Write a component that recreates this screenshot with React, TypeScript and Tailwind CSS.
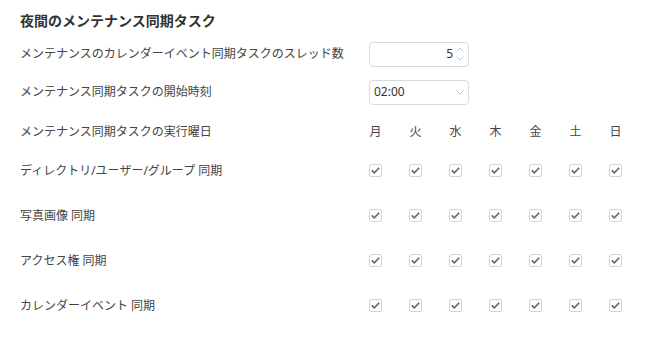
import type { ReactNode } from 'react'

const days = ['月', '火', '水', '木', '金', '土', '日']
const syncRows = ['ディレクトリ/ユーザー/グループ 同期', '写真画像 同期', 'アクセス権 同期', 'カレンダーイベント 同期']

function Chevron({ up = false }: { up?: boolean }) {
  return (
    <svg width="8" height="5" viewBox="0 0 8 5" fill="none" stroke="#c4c8cf" strokeWidth="1">
      <path d={up ? 'M0.5 4.5 L4 1 L7.5 4.5' : 'M0.5 0.5 L4 4 L7.5 0.5'} />
    </svg>
  )
}

function Check() {
  return (
    <span className="flex h-[13px] w-[13px] items-center justify-center rounded-[2px] border border-[#cfd4dc] bg-white">
      <svg width="9" height="7" viewBox="0 0 9 7" fill="none" stroke="#666" strokeWidth="1.6">
        <path d="M0.8 3.4 L3.3 5.8 L8.2 0.8" />
      </svg>
    </span>
  )
}

function Row({ label, h, children }: { label: string; h: string; children: ReactNode }) {
  return (
    <div className={`flex items-center ${h}`}>
      <div className="w-[349px] shrink-0 text-[12px] text-[#444]">{label}</div>
      {children}
    </div>
  )
}

export default function App() {
  return (
    <div className="h-[340px] w-[654px] bg-white pl-[20px] pt-[11px] font-['Noto_Sans','Noto_Sans_CJK_JP',sans-serif] text-[#333]">
      <h1 className="h-[24px] text-[14px] font-bold leading-[20px] text-[#333]">夜間のメンテナンス同期タスク</h1>
      <Row label="メンテナンスのカレンダーイベント同期タスクのスレッド数" h="h-[38px]">
        <div className="flex h-[25px] w-[100px] items-center justify-end rounded-[4px] border border-[#d7dbe2] pr-[4px]">
          <span className="text-[12px] text-[#333]">5</span>
          <span className="ml-[3px] flex flex-col gap-[4px]">
            <Chevron up />
            <Chevron />
          </span>
        </div>
      </Row>
      <Row label="メンテナンス同期タスクの開始時刻" h="h-[38px]">
        <div className="flex h-[25px] w-[100px] items-center justify-between rounded-[4px] border border-[#d7dbe2] pl-[4px] pr-[4px]">
          <span className="text-[12px] text-[#333]">02:00</span>
          <Chevron />
        </div>
      </Row>
      <Row label="メンテナンス同期タスクの実行曜日" h="h-[37px] pt-[4px]">
        {days.map((d) => (
          <div key={d} className="w-[40px] shrink-0 text-[12px] text-[#444]">
            <span className="inline-block w-[13px] text-center">{d}</span>
          </div>
        ))}
      </Row>
      {syncRows.map((r) => (
        <Row key={r} label={r} h="h-[45px]">
          {days.map((d) => (
            <div key={d} className="w-[40px] shrink-0">
              <Check />
            </div>
          ))}
        </Row>
      ))}
    </div>
  )
}
